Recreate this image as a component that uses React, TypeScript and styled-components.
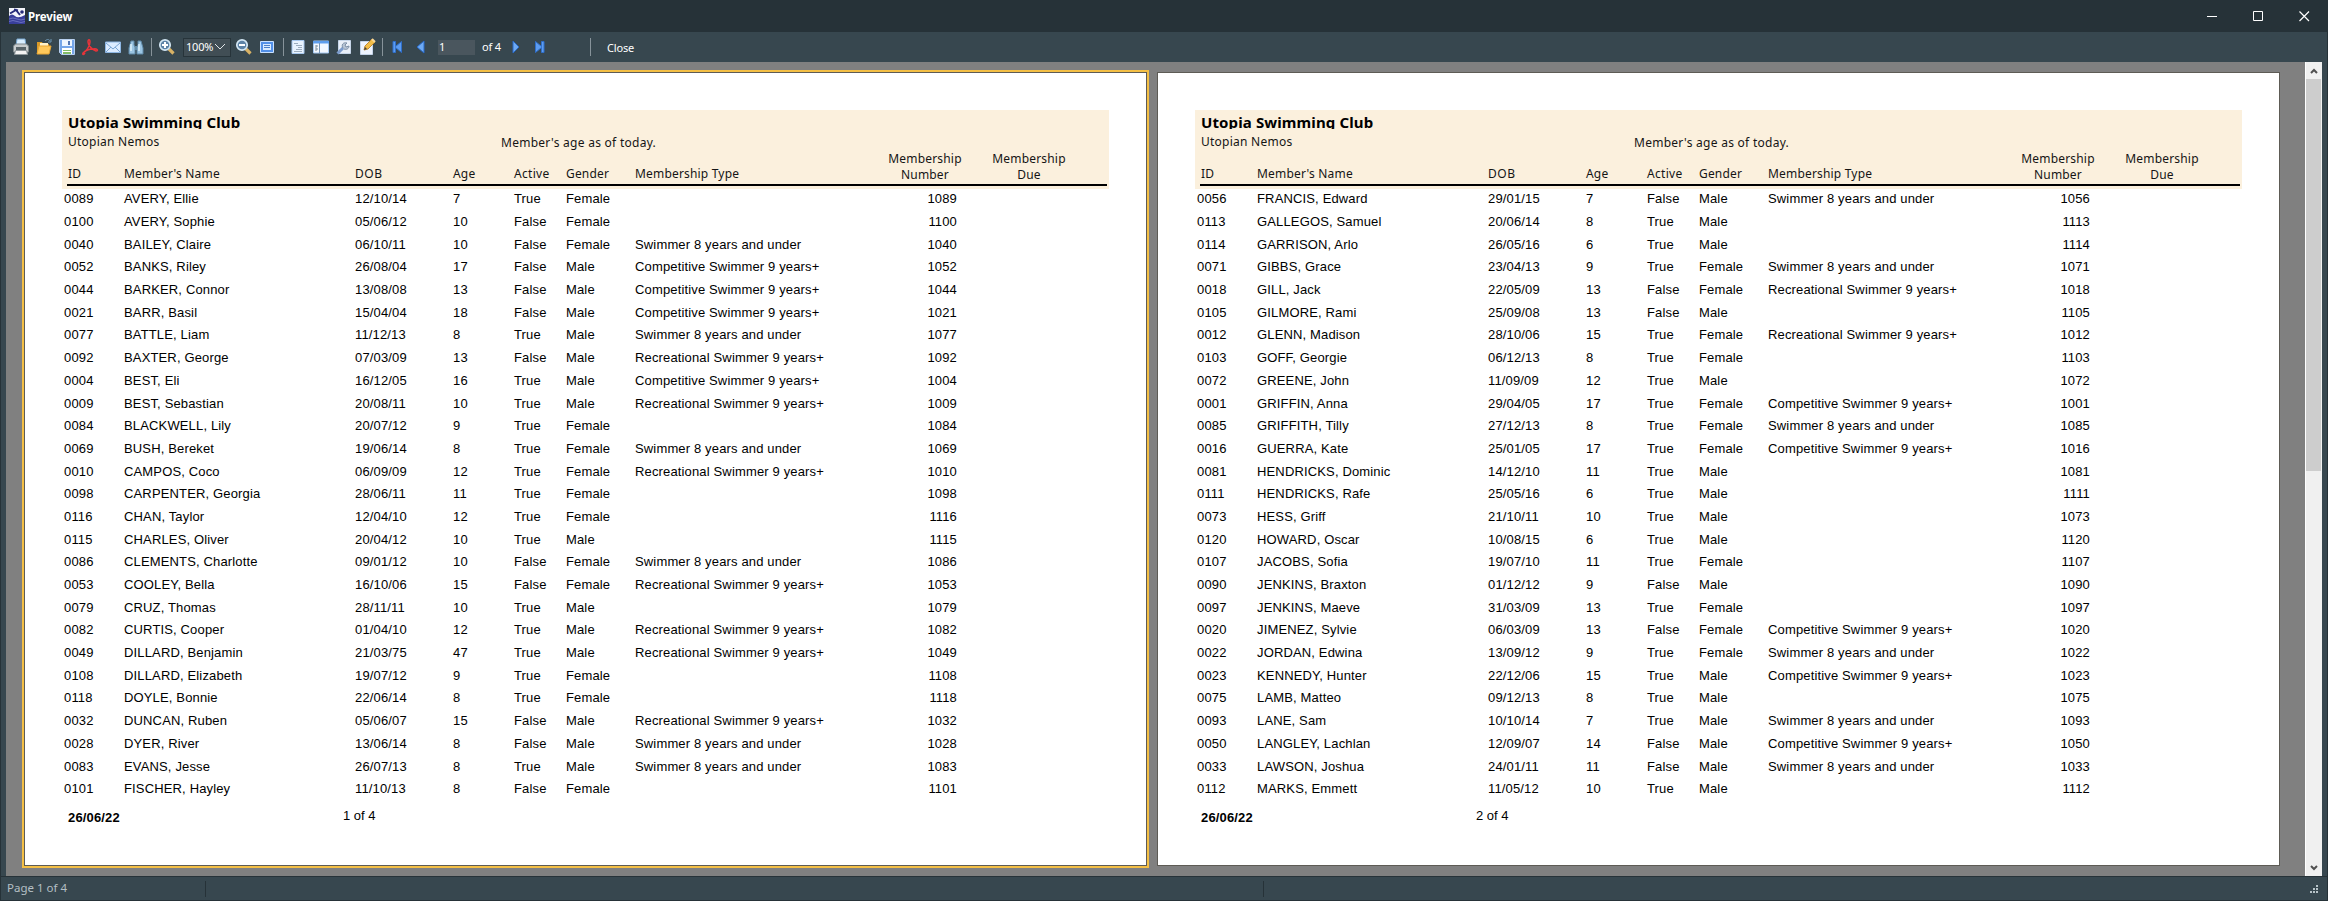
import React from "react";
import styled, { createGlobalStyle } from "styled-components";

const Global = createGlobalStyle`
  * { box-sizing: border-box; }
  html, body { margin: 0; padding: 0; overflow: hidden; background: #37474f; }
`;

const UI = `"Noto Sans", "Open Sans", sans-serif`;

const Window = styled.div`
  width: 2328px;
  height: 901px;
  display: flex;
  flex-direction: column;
  background: #37474f;
  border-left: 1px solid #263238;
  border-right: 1px solid #263238;
  font-family: ${UI};
`;

const TitleBar = styled.header`
  height: 32px;
  flex: none;
  margin: 0 -1px;
  padding: 0 18px 0 9px;
  display: flex;
  align-items: center;
  background: #263238;
  color: #fff;
`;

const Title = styled.h1`
  margin: 1px 0 0 3px;
  flex: 1;
  font: 700 11.5px/16px ${UI};
  letter-spacing: -0.15px;
`;

const WindowButtons = styled.div`
  display: flex;
  gap: 35px;
`;

const Toolbar = styled.nav`
  height: 30px;
  flex: none;
  padding-left: 11px;
  display: flex;
  align-items: center;
`;

const Tool = styled.span<{ $gap?: number }>`
  width: 18px;
  height: 18px;
  flex: none;
  margin-right: ${(p) => p.$gap ?? 5}px;
  svg { display: block; }
`;

const Divider = styled.i<{ $after: number }>`
  width: 1px;
  height: 18px;
  flex: none;
  background: #87939a;
  margin-right: ${(p) => p.$after}px;
`;

const ZoomSelect = styled.div`
  width: 48px;
  height: 19px;
  flex: none;
  margin-right: 4px;
  padding-left: 2px;
  display: flex;
  align-items: center;
  gap: 1px;
  background: #414e55;
  border: 1px solid #27343a;
  color: #fff;
  font: 11px/16px ${UI};
  letter-spacing: -0.2px;
`;

const PageInput = styled.div`
  width: 37px;
  height: 15px;
  flex: none;
  padding-left: 1px;
  background: #4a565e;
  color: #fff;
  font: 11px/14px ${UI};
`;

const ToolText = styled.span<{ $left: number; $right?: number; $drop?: number }>`
  margin: ${(p) => p.$drop ?? 0}px ${(p) => p.$right ?? 0}px 0 ${(p) => p.$left}px;
  color: #fff;
  font: 11px/16px ${UI};
  letter-spacing: -0.15px;
`;

const Viewer = styled.main`
  height: 814px;
  flex: none;
  margin: 0 5px;
  display: flex;
  background: #808080;
`;

const Pages = styled.div`
  flex: 1;
  display: flex;
  align-items: flex-start;
  padding: 8px 0 0 16px;
`;

const Sheet = styled.section<{ $selected?: boolean }>`
  width: ${(p) => (p.$selected ? 1127 : 1123)}px;
  height: ${(p) => (p.$selected ? 798 : 794)}px;
  margin: ${(p) => (p.$selected ? "0 8px 0 0" : "2px 0 0")};
  border: ${(p) => (p.$selected ? "2px solid #f4bf45" : "0")};
  flex: none;
`;

const Paper = styled.div`
  width: 1123px;
  height: 794px;
  background: #fff;
  border: 1px solid #5d5b55;
  padding: 37px 36px 0 37px;
  color: #000;
`;

const ReportHead = styled.header`
  width: 1047px;
  height: 79px;
  background: #fbf0dd;
  padding: 0 2px 3px 5px;
  display: flex;
  flex-direction: column;
  color: #151515;
`;

const ClubName = styled.h2`
  margin: 2px 0 0 1px;
  height: 17px;
  overflow: hidden;
  color: #000;
  font: 700 15px/20px ${UI};
  letter-spacing: 0.12px;
`;

const SubLine = styled.div`
  height: 22px;
  display: flex;
  padding: 4px 0 0 1px;
  font: 12px/18px ${UI};
`;

const Squad = styled.span`
  width: 433px;
  letter-spacing: 0.25px;
`;

const AgeNote = styled.span`
  padding-top: 1px;
  letter-spacing: 0.27px;
`;

const GRID = "60px 231px 98px 61px 52px 69px 240px 104px 1fr";

const HeadRow = styled.div`
  height: 33px;
  margin-left: -3px;
  padding-left: 0;
  display: grid;
  grid-template-columns: ${GRID};
  align-items: end;
  font: 12px/16px ${UI};
  padding-bottom: 2px;
`;

const HeadCell = styled.span<{ $center?: boolean; $inset?: number; $track?: number }>`
  padding-left: ${(p) => p.$inset ?? 0}px;
  text-align: ${(p) => (p.$center ? "center" : "left")};
  letter-spacing: ${(p) => p.$track ?? 0.18}px;
  white-space: pre-line;
  width: ${(p) => (p.$center ? "100px" : "auto")};
  margin-bottom: ${(p) => (p.$center ? -1 : 0)}px;
`;

const Rule = styled.div`
  height: 2px;
  background: #000;
`;

const Rows = styled.div`
  padding: 1px 0 0 2px;
`;

const Row = styled.div`
  height: 22.7px;
  display: grid;
  grid-template-columns: ${GRID};
  align-items: center;
  padding-bottom: 4px;
  white-space: pre;
  font: 13px/18px "Liberation Sans", Arial, sans-serif;
  letter-spacing: 0.15px;
`;

const Num = styled.span`
  width: 82px;
  text-align: right;
`;

const ReportFoot = styled.footer`
  display: flex;
  padding: 4px 0 0 6px;
  font: 13px/18px "Liberation Sans", Arial, sans-serif;
`;

const PrintDate = styled.strong`
  width: 275px;
  padding-top: 2px;
  letter-spacing: 0.15px;
`;

const ScrollBar = styled.aside`
  width: 17px;
  display: flex;
  flex-direction: column;
  background: #f0f0f0;
  border-left: 1px solid #fff;
`;

const ScrollArrow = styled.div`
  height: 17px;
  display: flex;
  align-items: center;
  justify-content: center;
`;

const Thumb = styled.div`
  height: 392px;
  background: #cdcdcd;
  margin-right: 1px;
  margin-bottom: auto;
`;

const StatusBar = styled.footer`
  height: 25px;
  border-top: 1px solid #263238;
  border-bottom: 1px solid #263238;
  display: flex;
  align-items: center;
  color: #b4bfc4;
  font: 11.5px/16px ${UI};
`;

const StatusCell = styled.div<{ $width: number }>`
  width: ${(p) => p.$width}px;
  height: 16px;
  line-height: 13px;
  padding-left: 6px;
  border-right: 1px solid #263238;
`;

const Grip = styled.svg`
  margin: 0 9px 0 auto;
`;

const shapes: Record<string, React.ReactNode> = {
  print: (
    <>
      <path d="M5 1h8l1 7H4z" fill="#d9eeff" stroke="#78a7d0" />
      <path d="M1.5 8l2-2h11l2 2v6h-15z" fill="#c8cccd" stroke="#7f888c" />
      <path d="M4 9h10v3H4z" fill="#596469" />
      <path d="M3.5 12.5h11l1 4h-13z" fill="#f3f3f3" stroke="#8f989c" />
    </>
  ),
  open: (
    <>
      <path d="M2 4h5l1 2h6v10H2z" fill="#d99a28" />
      <path d="M5 5h8v5H5z" fill="#fff2c9" />
      <path d="M2 16l2-8h12l-2 8z" fill="#ffc85b" stroke="#e9a734" />
      <path d="M10 3c2-2 4-2 5 0m1-2v3h-3" fill="none" stroke="#7199b5" />
    </>
  ),
  save: (
    <>
      <path d="M1.5 1.5h15v15h-13l-2-2z" fill="#75a5e9" stroke="#b8d0ef" />
      <path d="M4 2h10v6H4z" fill="#eef5ff" />
      <path d="M10 3h2v4h-2z" fill="#5276b5" />
      <path d="M4 10h10v6H4z" fill="#fff" />
      <path d="M5 12h8v1H5zm0 2h8v2H5z" fill="#82bc68" />
    </>
  ),
  pdf: (
    <path
      d="M2 15c3-1 7-7 7-11 0-3-2-3-2 0 0 4 5 8 8 9 3 0 1-3-3-2-4 0-8 2-10 4-1 2 1 2 2 0"
      fill="none"
      stroke="#e8343a"
      strokeWidth="1.5"
    />
  ),
  mail: (
    <>
      <path d="M1.5 4h15v10.5h-15z" fill="#dcecff" stroke="#8eb7e4" />
      <path d="M2 5l7 6 7-6M2 14l5-5m9 5l-5-5" fill="none" stroke="#79a5d3" />
    </>
  ),
  find: (
    <>
      <path d="M4 3h3v4l1 2v7H2v-6zM11 3h3l2 7v6h-6V9l1-2z" fill="#9bc5e3" stroke="#5e88a6" />
      <path d="M8 8h2v4H8z" fill="#638da9" />
      <path d="M4 6v7m8-7v7" stroke="#e7f7ff" strokeWidth="1.3" />
    </>
  ),
  zoomIn: (
    <>
      <path d="M11 11l4.500 4.500" stroke="#d8b265" strokeWidth="3.2" />
      <circle cx="7" cy="7" r="5.2" fill="#5d83a6" stroke="#d3e7f4" strokeWidth="1.7" />
      <path d="M4 7h6M7 4v6" stroke="#fff" strokeWidth="2" />
    </>
  ),
  zoomOut: (
    <>
      <path d="M11 11l4.500 4.500" stroke="#d8b265" strokeWidth="3.2" />
      <circle cx="7" cy="7" r="5.2" fill="#5d83a6" stroke="#d3e7f4" strokeWidth="1.7" />
      <path d="M4 7h6" stroke="#fff" strokeWidth="2" />
    </>
  ),
  fit: (
    <>
      <path d="M2.5 3.5h13v11h-13z" fill="#5290e8" stroke="#c9e1ff" />
      <path d="M5 6h8v6H5z" fill="#d8eaff" />
      <path d="M6 7.5h6M6 9.5h6" stroke="#4b7fc9" />
    </>
  ),
  outline: (
    <>
      <path d="M3 2.500h12v13H3z" fill="#e8f3ff" stroke="#a7c8ef" />
      <path d="M5 5.5h4m-2 2h6m-4 2h4m-6 2h6m-8 2h8" stroke="#93a5b8" strokeWidth="0.9" />
    </>
  ),
  thumbs: (
    <>
      <path d="M1.5 3h15v12h-15z" fill="#f3f8ff" stroke="#a5c9f3" />
      <path d="M1 3h16v2.5H1z" fill="#5e9eed" />
      <path d="M7.5 5v10" stroke="#7594b5" />
      <path d="M4 7v6m0-5h2m-2 3h2" stroke="#7f8f9d" />
    </>
  ),
  setup: (
    <>
      <path d="M3.5 2.5h12v13h-12z" fill="#e9eff8" stroke="#c6d5e8" />
      <path d="M2.500 15.500l6-6" stroke="#7b9bcb" strokeWidth="3" />
      <path d="M8 10c-2-3 0-6 4-5l-2 2 1 2 3-1c0 3-3 4-5 3" fill="#b7c4d4" stroke="#7d8fa6" />
    </>
  ),
  edit: (
    <>
      <path d="M2.5 3.5h12v13h-12z" fill="#edf3ff" stroke="#c4d3e8" />
      <path d="M6 12l1-4 7-7 3 3-7 7z" fill="#f2bd48" stroke="#be8a35" />
      <path d="M6 12l1-3 2 2z" fill="#433f3c" />
      <path d="M14 1l3 3" stroke="#f9d899" strokeWidth="2" />
    </>
  ),
  first: <path d="M4 3.500h2.500v5l6-5v11l-6-5v5H4z" fill="#5d9cf0" stroke="#2f6fcb" />,
  prev: <path d="M12 3v12L5 9z" fill="#6da9f3" stroke="#2869c7" />,
  next: <path d="M6 3v12l6-6z" fill="#6da9f3" stroke="#2869c7" />,
  last: <path d="M14 3.500h-2.500v5l-6-5v11l6-5v5H14z" fill="#5d9cf0" stroke="#2f6fcb" />,
};

function ToolIcon({ name, gap }: { name: string; gap?: number }) {
  return (
    <Tool $gap={gap}>
      <svg width="18" height="18" viewBox="0 0 18 18">{shapes[name]}</svg>
    </Tool>
  );
}

const pageOne = `0089|AVERY, Ellie|12/10/14|7|T|F||1089
0100|AVERY, Sophie|05/06/12|10|F|F||1100
0040|BAILEY, Claire|06/10/11|10|F|F|S|1040
0052|BANKS, Riley|26/08/04|17|F|M|C|1052
0044|BARKER, Connor|13/08/08|13|F|M|C|1044
0021|BARR, Basil|15/04/04|18|F|M|C|1021
0077|BATTLE, Liam|11/12/13|8|T|M|S|1077
0092|BAXTER, George|07/03/09|13|F|M|R|1092
0004|BEST, Eli|16/12/05|16|T|M|C|1004
0009|BEST, Sebastian|20/08/11|10|T|M|R|1009
0084|BLACKWELL, Lily|20/07/12|9|T|F||1084
0069|BUSH, Bereket|19/06/14|8|T|F|S|1069
0010|CAMPOS, Coco|06/09/09|12|T|F|R|1010
0098|CARPENTER, Georgia|28/06/11|11|T|F||1098
0116|CHAN, Taylor|12/04/10|12|T|F||1116
0115|CHARLES, Oliver|20/04/12|10|T|M||1115
0086|CLEMENTS, Charlotte|09/01/12|10|F|F|S|1086
0053|COOLEY, Bella|16/10/06|15|F|F|R|1053
0079|CRUZ, Thomas|28/11/11|10|T|M||1079
0082|CURTIS, Cooper|01/04/10|12|T|M|R|1082
0049|DILLARD, Benjamin|21/03/75|47|T|M|R|1049
0108|DILLARD, Elizabeth|19/07/12|9|T|F||1108
0118|DOYLE, Bonnie|22/06/14|8|T|F||1118
0032|DUNCAN, Ruben|05/06/07|15|F|M|R|1032
0028|DYER, River|13/06/14|8|F|M|S|1028
0083|EVANS, Jesse|26/07/13|8|T|M|S|1083
0101|FISCHER, Hayley|11/10/13|8|F|F||1101`;

const pageTwo = `0056|FRANCIS, Edward|29/01/15|7|F|M|S|1056
0113|GALLEGOS, Samuel|20/06/14|8|T|M||1113
0114|GARRISON, Arlo|26/05/16|6|T|M||1114
0071|GIBBS, Grace|23/04/13|9|T|F|S|1071
0018|GILL, Jack|22/05/09|13|F|F|R|1018
0105|GILMORE, Rami|25/09/08|13|F|M||1105
0012|GLENN, Madison|28/10/06|15|T|F|R|1012
0103|GOFF, Georgie|06/12/13|8|T|F||1103
0072|GREENE, John|11/09/09|12|T|M||1072
0001|GRIFFIN, Anna|29/04/05|17|T|F|C|1001
0085|GRIFFITH, Tilly|27/12/13|8|T|F|S|1085
0016|GUERRA, Kate|25/01/05|17|T|F|C|1016
0081|HENDRICKS, Dominic|14/12/10|11|T|M||1081
0111|HENDRICKS, Rafe|25/05/16|6|T|M||1111
0073|HESS, Griff|21/10/11|10|T|M||1073
0120|HOWARD, Oscar|10/08/15|6|T|M||1120
0107|JACOBS, Sofia|19/07/10|11|T|F||1107
0090|JENKINS, Braxton|01/12/12|9|F|M||1090
0097|JENKINS, Maeve|31/03/09|13|T|F||1097
0020|JIMENEZ, Sylvie|06/03/09|13|F|F|C|1020
0022|JORDAN, Edwina|13/09/12|9|T|F|S|1022
0023|KENNEDY, Hunter|22/12/06|15|T|M|C|1023
0075|LAMB, Matteo|09/12/13|8|T|M||1075
0093|LANE, Sam|10/10/14|7|T|M|S|1093
0050|LANGLEY, Lachlan|12/09/07|14|F|M|C|1050
0033|LAWSON, Joshua|24/01/11|11|F|M|S|1033
0112|MARKS, Emmett|11/05/12|10|T|M||1112`;

const types: Record<string, string> = {
  S: "Swimmer 8 years and under",
  C: "Competitive Swimmer 9 years+",
  R: "Recreational Swimmer 9 years+",
};

function Report({ data, page, selected }: { data: string; page: number; selected?: boolean }) {
  return (
    <Sheet $selected={selected}>
      <Paper>
        <ReportHead>
          <ClubName>Utopia Swimming Club</ClubName>
          <SubLine>
            <Squad>Utopian Nemos</Squad>
            <AgeNote>Member's age as of today.</AgeNote>
          </SubLine>
          <HeadRow>
            <HeadCell $inset={4}>ID</HeadCell>
            <HeadCell>Member's Name</HeadCell>
            <HeadCell $track={0.6}>DOB</HeadCell>
            <HeadCell>Age</HeadCell>
            <HeadCell $track={0.3}>Active</HeadCell>
            <HeadCell>Gender</HeadCell>
            <HeadCell>Membership Type</HeadCell>
            <HeadCell $center>{"Membership\nNumber"}</HeadCell>
            <HeadCell $center>{"Membership\nDue"}</HeadCell>
          </HeadRow>
          <Rule />
        </ReportHead>
        <Rows>
          {data.split("\n").map((line) => {
            const [id, name, dob, age, active, gender, type, num] = line.split("|");
            return (
              <Row key={id}>
                <span>{id}</span>
                <span>{name}</span>
                <span>{dob}</span>
                <span>{age}</span>
                <span>{active === "T" ? "True" : "False"}</span>
                <span>{gender === "F" ? "Female" : "Male"}</span>
                <span>{types[type] ?? ""}</span>
                <Num>{num}</Num>
              </Row>
            );
          })}
        </Rows>
        <ReportFoot>
          <PrintDate>26/06/22</PrintDate>
          <span>{page} of 4</span>
        </ReportFoot>
      </Paper>
    </Sheet>
  );
}

export default function App() {
  return (
    <Window>
      <Global />
      <TitleBar>
        <svg width="16" height="16" viewBox="0 0 16 16">
          <path d="M0 0h16v16H0z" fill="#f4f5fb" />
          <path d="M0 8q3-3 6 0t10-1v9H0z" fill="#383e9b" />
          <path d="M1 5.500l6-3.500 4 5M5 1.500l4 1" fill="none" stroke="#252b7a" strokeWidth="2" />
          <circle cx="13" cy="4" r="1.8" fill="#252b7a" />
          <path d="M0 11q4-2 8 0t8 0M0 13.500q4-2 8 0t8 0" fill="none" stroke="#6a70c0" />
        </svg>
        <Title>Preview</Title>
        <WindowButtons>
          <svg width="11" height="11"><path d="M0 5.500h10" stroke="#fff" /></svg>
          <svg width="11" height="11"><path d="M.5.5h9v9h-9z" fill="none" stroke="#fff" /></svg>
          <svg width="11" height="11"><path d="M.5.5l9.500 9.500m0-9.500L.5 10" stroke="#fff" strokeWidth="1.2" /></svg>
        </WindowButtons>
      </TitleBar>
      <Toolbar>
        <ToolIcon name="print" />
        <ToolIcon name="open" />
        <ToolIcon name="save" />
        <ToolIcon name="pdf" />
        <ToolIcon name="mail" />
        <ToolIcon name="find" gap={6} />
        <Divider $after={6} />
        <ToolIcon name="zoomIn" gap={7} />
        <ZoomSelect>
          100%
          <svg width="13" height="8" viewBox="0 0 13 8"><path d="M1 1l5 5 5-5" fill="none" stroke="#dfe4e7" /></svg>
        </ZoomSelect>
        <ToolIcon name="zoomOut" />
        <ToolIcon name="fit" gap={7} />
        <Divider $after={5} />
        <ToolIcon name="outline" />
        <ToolIcon name="thumbs" />
        <ToolIcon name="setup" />
        <ToolIcon name="edit" gap={6} />
        <Divider $after={6} />
        <ToolIcon name="first" />
        <ToolIcon name="prev" gap={8} />
        <PageInput>1</PageInput>
        <ToolText $left={7} $right={6}>of 4</ToolText>
        <ToolIcon name="next" />
        <ToolIcon name="last" gap={42} />
        <Divider $after={0} />
        <ToolText $left={16} $drop={2}>Close</ToolText>
      </Toolbar>
      <Viewer>
        <Pages>
          <Report data={pageOne} page={1} selected />
          <Report data={pageTwo} page={2} />
        </Pages>
        <ScrollBar>
          <ScrollArrow>
            <svg width="8" height="6"><path d="M1 5l3-3 3 3" fill="none" stroke="#505050" strokeWidth="2" /></svg>
          </ScrollArrow>
          <Thumb />
          <ScrollArrow>
            <svg width="8" height="6"><path d="M1 1l3 3 3-3" fill="none" stroke="#505050" strokeWidth="2" /></svg>
          </ScrollArrow>
        </ScrollBar>
      </Viewer>
      <StatusBar>
        <StatusCell $width={205}>Page 1 of 4</StatusCell>
        <StatusCell $width={1058} />
        <Grip width="8" height="8" fill="#b7c3c8">
          <path d="M6 0h2v2H6zM3 3h2v2H3zM6 3h2v2H6zM0 6h2v2H0zM3 6h2v2H3zM6 6h2v2H6z" />
        </Grip>
      </StatusBar>
    </Window>
  );
}
